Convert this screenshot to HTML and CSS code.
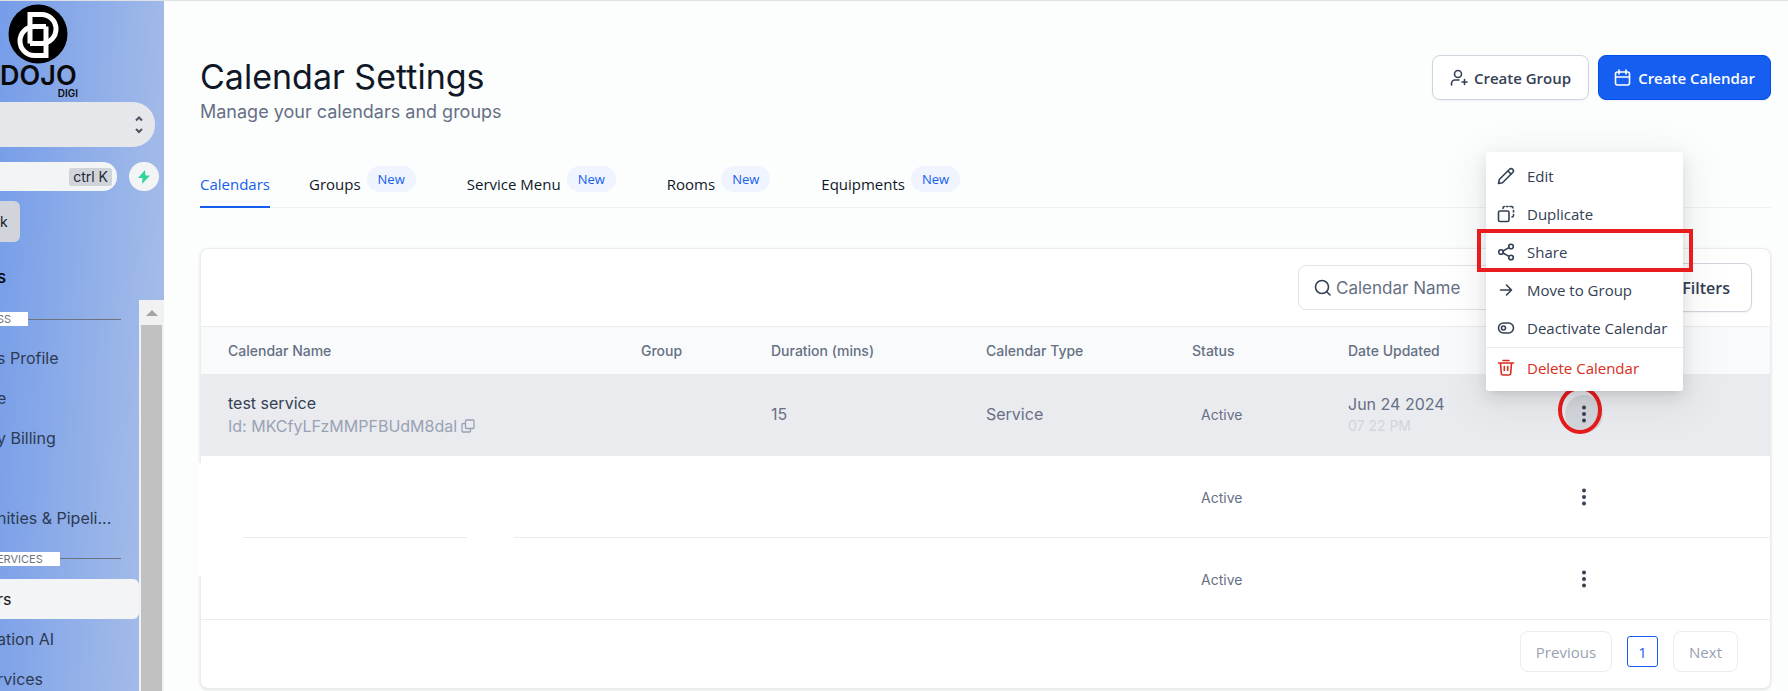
FILE: index.html
```html
<!DOCTYPE html>
<html lang="en">
<head>
  <meta charset="UTF-8">
  <meta name="viewport" content="width=device-width, initial-scale=1">
  <title>Calendar Settings</title>
  <link rel="stylesheet" href="styles.css">
</head>
<body>
  <aside class="sidebar">
    <div class="brand">
      <svg class="brand-mark" viewBox="0 0 60 60" aria-hidden="true">
        <circle cx="30" cy="30" r="29.5" fill="#000"/>
        <g fill="none" stroke="#fff" stroke-width="5">
          <path d="M22 39.500V10.500H33.500a14.500 14.500 0 0 1 0 29H22"/>
          <path d="M38 22.500v29H26.500a14.500 14.500 0 0 1 0-29H38"/>
        </g>
      </svg>
      <div class="brand-name">DOJO</div>
      <div class="brand-sub">DIGI</div>
    </div>
    <button class="location" aria-label="Switch location">
      <svg width="8" height="18" viewBox="0 0 8 18" fill="none" stroke="#4b5563" stroke-width="2"><path d="M1 4.500l3-3 3 3M1 13l3 3 3-3"/></svg>
    </button>
    <div class="search-row">
      <button class="quick-search"><kbd>ctrl K</kbd></button>
      <button class="bolt" aria-label="Quick actions">
        <svg width="12" height="14" viewBox="0 0 12 14" fill="#34d399"><path d="M7 0L0 8h4.500L4 14l8-8.500H7.500z"/></svg>
      </button>
    </div>
    <button class="back">k</button>
    <h2 class="sidebar-title">s</h2>
    <div class="nav-wrap">
      <nav class="nav">
        <div class="section"><span>SS</span></div>
        <a class="nav-item" href="#">s Profile</a>
        <a class="nav-item" href="#">e</a>
        <a class="nav-item" href="#">y Billing</a>
        <div class="nav-item"></div>
        <a class="nav-item" href="#">nities &amp; Pipeli...</a>
        <div class="section section-next"><span>ERVICES</span></div>
        <a class="nav-item active" href="#">rs</a>
        <a class="nav-item" href="#">ation AI</a>
        <a class="nav-item" href="#">rvices</a>
      </nav>
      <div class="scrollbar">
        <svg class="scroll-up" width="12" height="6" viewBox="0 0 12 6"><path d="M6 0l6 6H0z" fill="#a3a3a3"/></svg>
        <div class="thumb"></div>
      </div>
    </div>
  </aside>

  <main class="main">
    <header class="page-header">
      <div>
        <h1>Calendar Settings</h1>
        <p>Manage your calendars and groups</p>
      </div>
      <div class="header-actions">
        <button class="btn">
          <svg width="18" height="18" viewBox="0 0 18 18" class="icon"><circle cx="8" cy="5" r="3.500"/><path d="M1.500 16v-1.500a3.500 3.500 0 0 1 3.500-3.500h4M14.500 10.500v5M12 13h5"/></svg>
          Create Group
        </button>
        <button class="btn btn-primary">
          <svg width="18" height="18" viewBox="0 0 18 18" class="icon"><rect x="1.500" y="3" width="14" height="13" rx="2"/><path d="M1.500 8h14M5 1v4M12 1v4"/></svg>
          Create Calendar
        </button>
      </div>
    </header>

    <nav class="tabs">
      <a class="tab active" href="#">Calendars</a>
      <a class="tab" href="#">Groups <span class="badge">New</span></a>
      <a class="tab" href="#">Service Menu <span class="badge">New</span></a>
      <a class="tab" href="#">Rooms <span class="badge">New</span></a>
      <a class="tab" href="#">Equipments <span class="badge">New</span></a>
    </nav>

    <section class="card">
      <div class="toolbar">
        <label class="search">
          <svg width="18" height="18" viewBox="0 0 18 18" class="icon"><circle cx="8" cy="8" r="6.500"/><path d="M13 13l3 3"/></svg>
          <input type="text" placeholder="Calendar Name" aria-label="Calendar Name">
        </label>
        <button class="btn filters">Filters</button>
      </div>

      <table class="calendars">
        <colgroup>
          <col>
          <col class="col-group">
          <col class="col-duration">
          <col class="col-type">
          <col class="col-status">
          <col class="col-date">
          <col class="col-actions">
        </colgroup>
        <thead>
          <tr>
            <th>Calendar Name</th>
            <th>Group</th>
            <th>Duration (mins)</th>
            <th>Calendar Type</th>
            <th>Status</th>
            <th>Date Updated</th>
            <th></th>
          </tr>
        </thead>
        <tbody>
          <tr class="selected">
            <td>
              <div class="name">test service</div>
              <div class="cal-id">Id: MKCfyLFzMMPFBUdM8dal
                <svg width="14" height="14" viewBox="0 0 14 14" class="copy"><rect x="4.500" y="1" width="8.500" height="8.500" rx="1"/><path d="M4.500 4.500H2a1 1 0 0 0-1 1V12a1 1 0 0 0 1 1h6.500a1 1 0 0 0 1-1V9.500"/></svg>
              </div>
            </td>
            <td></td>
            <td>15</td>
            <td>Service</td>
            <td><span class="status">Active</span></td>
            <td>
              <div class="date">Jun 24 2024</div>
              <div class="time">07 22 PM</div>
            </td>
            <td class="actions">
              <div class="row-menu">
                <button class="dots open" aria-label="Actions">
                  <svg width="4" height="18" viewBox="0 0 4 18"><circle cx="2" cy="2.500" r="2"/><circle cx="2" cy="9" r="2"/><circle cx="2" cy="15.500" r="2"/></svg>
                </button>
                <span class="ring"></span>
                <div class="menu">
                  <button class="menu-item">
                    <svg width="18" height="18" viewBox="0 0 18 18" class="icon"><path d="M1.500 16.500l.8-4L12.500 2.300a2 2 0 0 1 3.200 3.200L5.500 15.700zM11 4l3.200 3.200"/></svg>
                    Edit
                  </button>
                  <button class="menu-item">
                    <svg width="18" height="18" viewBox="0 0 18 18" class="icon"><rect x="1.500" y="6" width="10.500" height="10.500" rx="1.500"/><path d="M6 3.500V3a1.500 1.500 0 0 1 1.500-1.500M9.500 1.500h1.500M13 1.500h1.500a1.500 1.500 0 0 1 1.500 1.500M16.500 5.500V7M16.500 9.500v1a1.500 1.500 0 0 1-1.500 1.500"/></svg>
                    Duplicate
                  </button>
                  <button class="menu-item highlighted">
                    <svg width="18" height="18" viewBox="0 0 18 18" class="icon"><circle cx="14" cy="3.500" r="2.300"/><circle cx="4" cy="9" r="2.300"/><circle cx="14" cy="14.500" r="2.300"/><path d="M6 8l6-3.400M6 10l6 3.400"/></svg>
                    Share
                  </button>
                  <button class="menu-item">
                    <svg width="18" height="18" viewBox="0 0 18 18" class="icon"><path d="M3.500 9h11M9.500 4l5 5-5 5"/></svg>
                    Move to Group
                  </button>
                  <button class="menu-item">
                    <svg width="18" height="18" viewBox="0 0 18 18" class="icon"><rect x="1.500" y="4" width="15" height="10" rx="5"/><circle cx="6.500" cy="9" r="2"/></svg>
                    Deactivate Calendar
                  </button>
                  <button class="menu-item danger">
                    <svg width="18" height="18" viewBox="0 0 18 18" class="icon"><path d="M6 1.500h6M1.500 4h15M3.500 4l.8 10.500A2 2 0 0 0 6.300 16h5.400a2 2 0 0 0 2-1.500L14.500 4M7.300 7.500v4M10.700 7.500v4"/></svg>
                    Delete Calendar
                  </button>
                </div>
              </div>
            </td>
          </tr>
          <tr>
            <td></td>
            <td></td>
            <td></td>
            <td></td>
            <td><span class="status">Active</span></td>
            <td></td>
            <td class="actions">
              <button class="dots" aria-label="Actions">
                <svg width="4" height="18" viewBox="0 0 4 18"><circle cx="2" cy="2.500" r="2"/><circle cx="2" cy="9" r="2"/><circle cx="2" cy="15.500" r="2"/></svg>
              </button>
            </td>
          </tr>
          <tr>
            <td></td>
            <td></td>
            <td></td>
            <td></td>
            <td><span class="status">Active</span></td>
            <td></td>
            <td class="actions">
              <button class="dots" aria-label="Actions">
                <svg width="4" height="18" viewBox="0 0 4 18"><circle cx="2" cy="2.500" r="2"/><circle cx="2" cy="9" r="2"/><circle cx="2" cy="15.500" r="2"/></svg>
              </button>
            </td>
          </tr>
        </tbody>
      </table>

      <div class="pagination">
        <button class="page-btn">Previous</button>
        <button class="page-num">1</button>
        <button class="page-btn">Next</button>
      </div>

      <!-- blanked out calendar details -->
      <span class="redact redact-edge"></span>
      <span class="redact redact-name"></span>
    </section>
  </main>
</body>
</html>
```
FILE: styles.css
```css
* {
  margin: 0;
  padding: 0;
  box-sizing: border-box;
}
body {
  display: flex;
  height: 100vh;
  overflow: hidden;
  background: #fcfdfd;
  border-top: 1px solid #dfe1e3;
  font-family: Inter, "Liberation Sans", sans-serif;
  color: #101828;
}
button, input {
  font: inherit;
  color: inherit;
  border: none;
  background: none;
}
button {
  cursor: pointer;
}
a {
  color: inherit;
  text-decoration: none;
}
.icon {
  flex: none;
  fill: none;
  stroke: currentColor;
  stroke-width: 1.6;
  stroke-linecap: round;
  stroke-linejoin: round;
}

/* Sidebar */
.sidebar {
  flex: none;
  display: flex;
  flex-direction: column;
  align-items: flex-start;
  width: 164px;
  overflow: hidden;
  background: linear-gradient(93deg, #769de9, #a9bfe8);
}
.brand {
  width: 78px;
  height: 101px;
  padding-top: 3px;
}
.brand-mark {
  display: block;
  width: 60px;
  height: 60px;
  margin-left: 8px;
}
.brand-name {
  font-size: 27px;
  font-weight: 600;
  line-height: 24px;
  color: #0a0a0a;
}
.brand-sub {
  font-size: 10px;
  font-weight: 600;
  line-height: 10px;
  text-align: right;
  color: #0a0a0a;
}
.location {
  display: flex;
  align-items: center;
  justify-content: flex-end;
  width: 155px;
  height: 45px;
  padding-right: 12px;
  border-radius: 0 22px 22px 0;
  background: #e5e7eb;
}
.search-row {
  display: flex;
  gap: 12px;
  margin-top: 15px;
}
.quick-search {
  display: flex;
  align-items: center;
  justify-content: flex-end;
  width: 117px;
  height: 29px;
  padding-right: 5px;
  border-radius: 0 14px 14px 0;
  background: #f3f4f6;
}
.quick-search kbd {
  padding: 0 4px;
  border-radius: 2px;
  background: #d1d5db;
  font: 14px/18px Inter, sans-serif;
  color: #1f2937;
}
.bolt {
  display: flex;
  align-items: center;
  justify-content: center;
  width: 30px;
  height: 29px;
  border-radius: 15px;
  background: #f3f4f6;
}
.back {
  width: 20px;
  height: 41px;
  margin-top: 10px;
  padding-right: 16px;
  border-radius: 0 6px 6px 0;
  background: #d1d5db;
  font-size: 14px;
}
.sidebar-title {
  height: 58px;
  margin-left: -3px;
  font-size: 17px;
  font-weight: 500;
  line-height: 70px;
  color: #000;
}
.nav-wrap {
  flex: 1;
  display: flex;
  width: 100%;
  min-height: 0;
}
.nav {
  flex: 1;
  margin-left: -3px;
}
.section {
  display: flex;
  align-items: center;
  height: 38px;
  margin-right: 18px;
}
.section-next {
  height: 41px;
}
.section::after {
  content: "";
  flex: 1;
  height: 1px;
  background: #6b7280;
}
.section span {
  padding-right: 17px;
  background: #fff;
  font-size: 11px;
  line-height: 14px;
  color: #6b7280;
}
.nav-item {
  display: flex;
  align-items: center;
  height: 40px;
  font-size: 16px;
  white-space: nowrap;
  color: #2c3a52;
}
.nav-item.active {
  border-radius: 0 6px 6px 0;
  background: #f3f4f6;
  color: #111;
}
.scrollbar {
  display: flex;
  flex-direction: column;
  align-items: center;
  width: 25px;
  background: #f1f1f1;
}
.scroll-up {
  margin: 10px 0 9px;
}
.thumb {
  flex: 1;
  width: 21px;
  background: #c1c1c1;
}

/* Page */
.main {
  flex: 1;
  min-width: 0;
  padding: 54px 17px 0 36px;
}
.page-header {
  display: flex;
  justify-content: space-between;
  align-items: flex-start;
  height: 100px;
}
.page-header h1 {
  font-size: 34px;
  font-weight: 400;
  line-height: 43px;
}
.page-header p {
  font-size: 18px;
  line-height: 28px;
  color: #667085;
}
.header-actions {
  display: flex;
  gap: 9px;
}
.btn {
  display: flex;
  align-items: center;
  gap: 6px;
  height: 45px;
  padding: 0 17px;
  border: 1px solid #d0d5dd;
  border-radius: 8px;
  background: #fff;
  font-family: "Open Sans", sans-serif;
  font-size: 15px;
  font-weight: 600;
  color: #344054;
  box-shadow: 0 1px 2px rgba(16, 24, 40, 0.05);
}
.btn-primary {
  padding: 0 15px;
  border-color: #004eeb;
  background: #155eef;
  color: #fff;
}
.tabs {
  display: flex;
  gap: 39px;
  border-bottom: 1px solid #eef0f2;
  font-family: "Open Sans", sans-serif;
  font-size: 15px;
}
.tab {
  display: flex;
  align-items: center;
  height: 52px;
  padding-top: 6px;
  white-space: nowrap;
}
.tab.active {
  height: 53px;
  margin-bottom: -1px;
  border-bottom: 2px solid #155eef;
  color: #155eef;
}
.badge {
  margin: 0 12px 10px 6px;
  padding: 0 11px;
  border-radius: 13px;
  background: #eff4ff;
  font-size: 13px;
  line-height: 26px;
  color: #155eef;
}

.card {
  position: relative;
  margin-top: 40px;
  border: 1px solid #eaecf0;
  border-radius: 8px;
  background: #fff;
  box-shadow: 0 1px 3px rgba(16, 24, 40, 0.12);
}
.toolbar {
  display: flex;
  justify-content: flex-end;
  align-items: center;
  gap: 16px;
  height: 77px;
  padding-right: 18px;
}
.search {
  display: flex;
  align-items: center;
  gap: 4px;
  width: 320px;
  height: 45px;
  padding: 0 15px;
  border: 1px solid #e0e3e8;
  border-radius: 8px;
  color: #344054;
}
.search input {
  flex: 1;
  min-width: 0;
  font-size: 17px;
  outline: none;
}
.search input::placeholder {
  color: #667085;
}
.filters {
  justify-content: flex-end;
  width: 118px;
  height: 49px;
  padding-right: 21px;
  font-size: 16px;
}

.calendars {
  width: 100%;
  table-layout: fixed;
  border-collapse: collapse;
}
.col-group { width: 130px; }
.col-duration { width: 215px; }
.col-type { width: 206px; }
.col-status { width: 156px; }
.col-date { width: 236px; }
.col-actions { width: 213px; }
.calendars th {
  height: 47px;
  padding-left: 27px;
  border-top: 1px solid #eaecf0;
  background: #f9fafb;
  font-size: 14px;
  font-weight: 500;
  text-align: left;
  color: #667085;
}
.calendars td {
  height: 82px;
  padding-left: 27px;
  border-bottom: 1px solid #eaecf0;
  font-size: 16px;
  color: #667085;
}
.selected td {
  background: #eaebef;
}
.name {
  line-height: 24px;
  color: #344054;
}
.cal-id {
  display: flex;
  align-items: center;
  gap: 4px;
  line-height: 22px;
  color: #98a2b3;
}
.copy {
  fill: none;
  stroke: #98a2b3;
  stroke-width: 1.3;
}
.status {
  padding: 0 9px;
  font-size: 14px;
}
.date {
  line-height: 24px;
}
.time {
  font-size: 14px;
  line-height: 20px;
  color: #d0d5dd;
}
.calendars .actions {
  padding-left: 8px;
}
.dots {
  display: flex;
  align-items: center;
  justify-content: center;
  width: 38px;
  height: 38px;
  border-radius: 50%;
}
.dots svg {
  fill: #344054;
}
.dots.open {
  background: #d3d6db;
}
.row-menu {
  position: relative;
  width: 38px;
}
.ring {
  position: absolute;
  inset: -9px 1px -1px -7px;
  border: 4px solid #e81c1c;
  border-radius: 50%;
}
.menu {
  position: absolute;
  bottom: 42px;
  left: -79px;
  width: 197px;
  padding: 5px 0 4px;
  border-radius: 3px;
  background: #fff;
  box-shadow: 0 3px 6px -4px rgba(0, 0, 0, 0.12), 0 6px 16px rgba(0, 0, 0, 0.1), 0 9px 40px 12px rgba(0, 0, 0, 0.05);
}
.menu-item {
  position: relative;
  display: flex;
  align-items: center;
  gap: 12px;
  width: 100%;
  height: 38px;
  padding-left: 11px;
  font-family: "Open Sans", sans-serif;
  font-size: 15px;
  white-space: nowrap;
  color: #344054;
}
.menu-item.highlighted::after {
  content: "";
  position: absolute;
  inset: -4px -10px -1px -9px;
  border: 4px solid #e81c1c;
}
.menu-item.danger {
  height: 40px;
  border-top: 1px solid #eaecf0;
  color: #d92d20;
}

.pagination {
  display: flex;
  justify-content: flex-end;
  align-items: flex-start;
  gap: 15px;
  height: 68px;
  padding: 11px 32px 0 0;
  font-family: "Open Sans", sans-serif;
  font-size: 15px;
}
.page-btn {
  height: 41px;
  padding: 0 15px;
  border: 1px solid #eaecf0;
  border-radius: 8px;
  color: #98a2b3;
}
.page-num {
  width: 31px;
  height: 31px;
  margin-top: 5px;
  border: 1px solid #155eef;
  border-radius: 3px;
  color: #155eef;
}
.redact {
  position: absolute;
  background: #fff;
}
.redact-edge {
  top: 214px;
  left: -3px;
  width: 45px;
  height: 113px;
}
.redact-name {
  top: 280px;
  left: 266px;
  width: 47px;
  height: 20px;
}
```
